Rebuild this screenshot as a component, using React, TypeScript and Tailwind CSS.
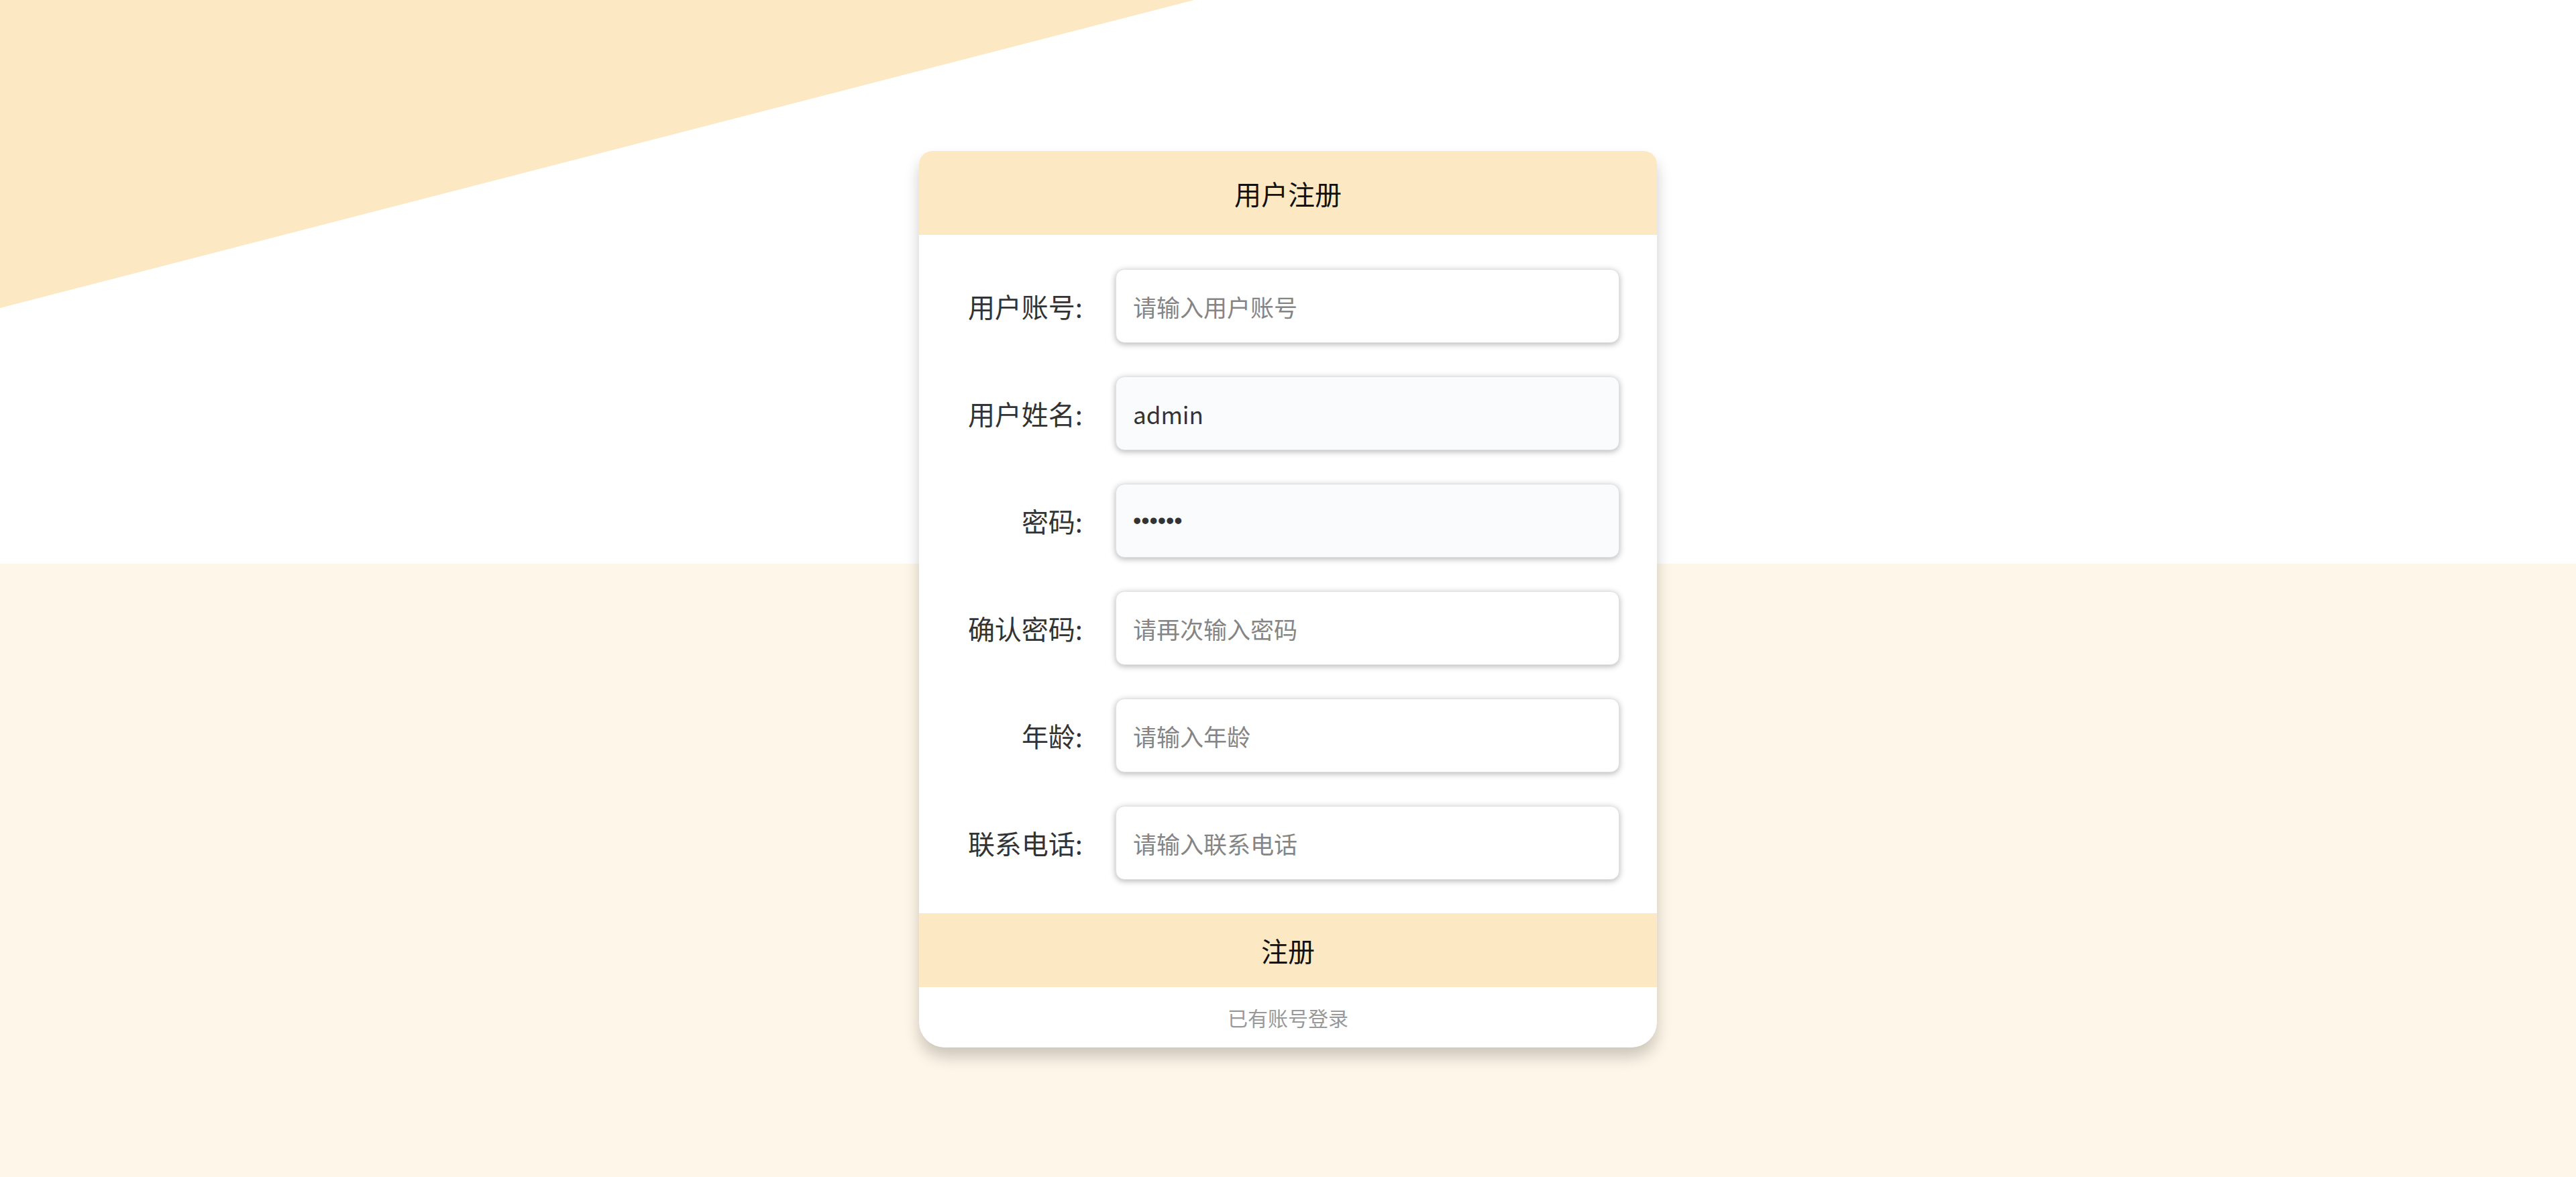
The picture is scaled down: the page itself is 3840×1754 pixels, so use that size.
import React from "react";

const fields = [
  { label: "用户账号:", placeholder: "请输入用户账号", value: "", type: "text", filled: false },
  { label: "用户姓名:", placeholder: "请输入用户姓名", value: "admin", type: "text", filled: true },
  { label: "密码:", placeholder: "请输入密码", value: "123456", type: "password", filled: true },
  { label: "确认密码:", placeholder: "请再次输入密码", value: "", type: "password", filled: false },
  { label: "年龄:", placeholder: "请输入年龄", value: "", type: "text", filled: false },
  { label: "联系电话:", placeholder: "请输入联系电话", value: "", type: "text", filled: false },
];

export default function App() {
  return (
    <div className="relative w-full h-[1754px] overflow-hidden bg-[linear-gradient(to_bottom,#ffffff_840px,#fef6e8_840px)] font-['Noto_Sans_CJK_SC',sans-serif]">
      <div className="absolute left-0 top-0 w-[1780px] h-[459px] bg-[#fde8c4] [clip-path:polygon(0_0,100%_0,0_100%)]" />
      <div className="relative flex justify-center pt-[225px]">
        <div className="w-[1100px] bg-white rounded-t-[20px] rounded-b-[38px] overflow-hidden shadow-[0_14px_22px_rgba(0,0,0,0.2)]">
          <div className="h-[125px] bg-[#fde8c4] flex items-center justify-center text-[40px] text-[#111]">
            用户注册
          </div>
          <div className="flex flex-col gap-[50px] pt-[51px] pb-[50px]">
            {fields.map((f) => (
              <div key={f.label} className="flex items-center h-[110px]">
                <div className="w-[244px] text-right text-[40px] text-[#333] leading-none">{f.label}</div>
                <input
                  type={f.type}
                  defaultValue={f.value}
                  placeholder={f.placeholder}
                  readOnly
                  className={`ml-[49px] w-[751px] h-[110px] rounded-[13px] border border-[#e2e2e2] px-[25px] text-[35px] text-[#333] placeholder:text-[#858585] outline-none shadow-[0_2px_10px_rgba(0,0,0,0.3)] ${f.type === "password" && f.value ? "font-['Liberation_Sans',sans-serif]" : "font-['Noto_Sans_CJK_SC',sans-serif]"} ${f.filled ? "bg-[#fafbfd]" : "bg-white"}`}
                />
              </div>
            ))}
          </div>
          <div className="h-[110px] bg-[#fde8c4] flex items-center justify-center text-[40px] text-[#111]">
            注册
          </div>
          <div className="h-[90px] flex items-center justify-center text-[30px] text-[#999]">
            已有账号登录
          </div>
        </div>
      </div>
    </div>
  );
}
